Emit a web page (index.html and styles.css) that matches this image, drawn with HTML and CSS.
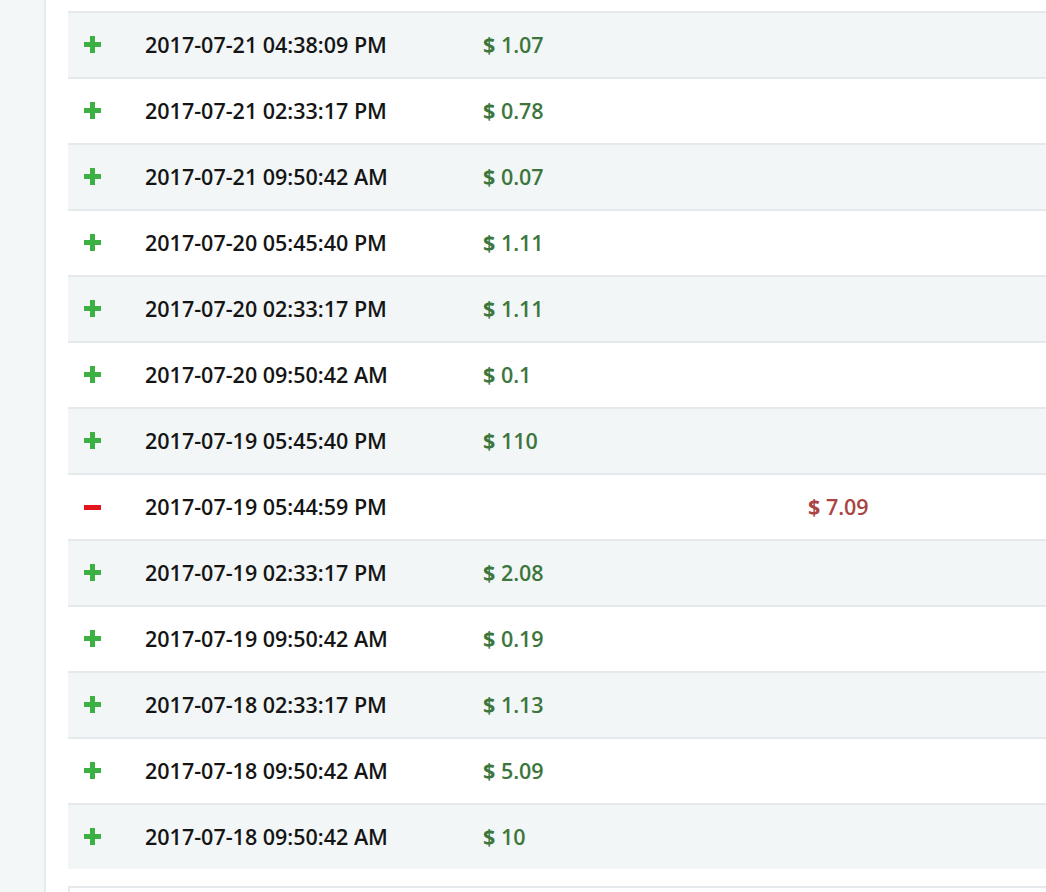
FILE: index.html
```html
<!DOCTYPE html>
<html>
<head>
<meta charset="utf-8">
<link rel="stylesheet" href="styles.css">
</head>
<body>
<div class="layout">
  <aside class="sidebar"></aside>
  <main class="main">
    <div class="table">
      <div class="row odd"><span class="sign plus"></span><span class="date">2017-07-21 04:38:09 PM</span><span class="credit"><b>$</b> 1.07</span><span></span></div>
      <div class="row"><span class="sign plus"></span><span class="date">2017-07-21 02:33:17 PM</span><span class="credit"><b>$</b> 0.78</span><span></span></div>
      <div class="row odd"><span class="sign plus"></span><span class="date">2017-07-21 09:50:42 AM</span><span class="credit"><b>$</b> 0.07</span><span></span></div>
      <div class="row"><span class="sign plus"></span><span class="date">2017-07-20 05:45:40 PM</span><span class="credit"><b>$</b> 1.11</span><span></span></div>
      <div class="row odd"><span class="sign plus"></span><span class="date">2017-07-20 02:33:17 PM</span><span class="credit"><b>$</b> 1.11</span><span></span></div>
      <div class="row"><span class="sign plus"></span><span class="date">2017-07-20 09:50:42 AM</span><span class="credit"><b>$</b> 0.1</span><span></span></div>
      <div class="row odd"><span class="sign plus"></span><span class="date">2017-07-19 05:45:40 PM</span><span class="credit"><b>$</b> 110</span><span></span></div>
      <div class="row"><span class="sign minus"></span><span class="date">2017-07-19 05:44:59 PM</span><span></span><span class="debit"><b>$</b> 7.09</span></div>
      <div class="row odd"><span class="sign plus"></span><span class="date">2017-07-19 02:33:17 PM</span><span class="credit"><b>$</b> 2.08</span><span></span></div>
      <div class="row"><span class="sign plus"></span><span class="date">2017-07-19 09:50:42 AM</span><span class="credit"><b>$</b> 0.19</span><span></span></div>
      <div class="row odd"><span class="sign plus"></span><span class="date">2017-07-18 02:33:17 PM</span><span class="credit"><b>$</b> 1.13</span><span></span></div>
      <div class="row"><span class="sign plus"></span><span class="date">2017-07-18 09:50:42 AM</span><span class="credit"><b>$</b> 5.09</span><span></span></div>
      <div class="row odd"><span class="sign plus"></span><span class="date">2017-07-18 09:50:42 AM</span><span class="credit"><b>$</b> 10</span><span></span></div>
    </div>
    <div class="next-box"></div>
  </main>
</div>
</body>
</html>
```

FILE: styles.css
```css
* { box-sizing: border-box; }
html, body { margin: 0; padding: 0; }
body {
  background: #ffffff;
  font-family: "Open Sans", "Noto Sans", sans-serif;
  width: 1046px;
  height: 892px;
  overflow: hidden;
}
.layout {
  display: flex;
  height: 892px;
}
.sidebar {
  flex: 0 0 46px;
  background: #f4f7f8;
  border-right: 2px solid #e8ebed;
}
.main {
  flex: 1 1 auto;
  padding: 11px 0 0 22px;
  overflow: hidden;
}
.table {
  width: 1100px;
  border-top: 2px solid #e6e9ec;
}
.row {
  display: grid;
  grid-template-columns: 61px 338px 325px 1fr;
  align-items: center;
  height: 66px;
  border-top: 2px solid #e6e9ec;
  font-size: 21.5px;
  line-height: 30px;
  font-weight: 600;
  color: #151515;
  background: #ffffff;
}
.row:first-child { border-top: none; height: 64px; }
.row.odd { background: #f3f6f7; }
.row > span { padding-left: 16px; }
.sign {
  position: relative;
  display: block;
  height: 18px;
}
.sign.plus::before,
.sign.plus::after,
.sign.minus::before {
  content: "";
  position: absolute;
  background: #3cb043;
}
.sign.plus::before {
  left: 16px; top: 6px; width: 17px; height: 5px;
}
.sign.plus::after {
  left: 22px; top: 0; width: 5px; height: 17px;
}
.sign.minus::before {
  background: #e3141c;
  left: 16px; top: 7px; width: 17px; height: 5px;
}
.credit {
  color: #3c763d;
  font-weight: 600;
}
.debit {
  color: #a94442;
  font-weight: 600;
}
.credit b, .debit b { font-weight: 700; }
.next-box {
  margin-top: 17px;
  width: 1100px;
  height: 40px;
  border-top: 2px solid #e6e9ec;
  border-left: 2px solid #e6e9ec;
}
```
